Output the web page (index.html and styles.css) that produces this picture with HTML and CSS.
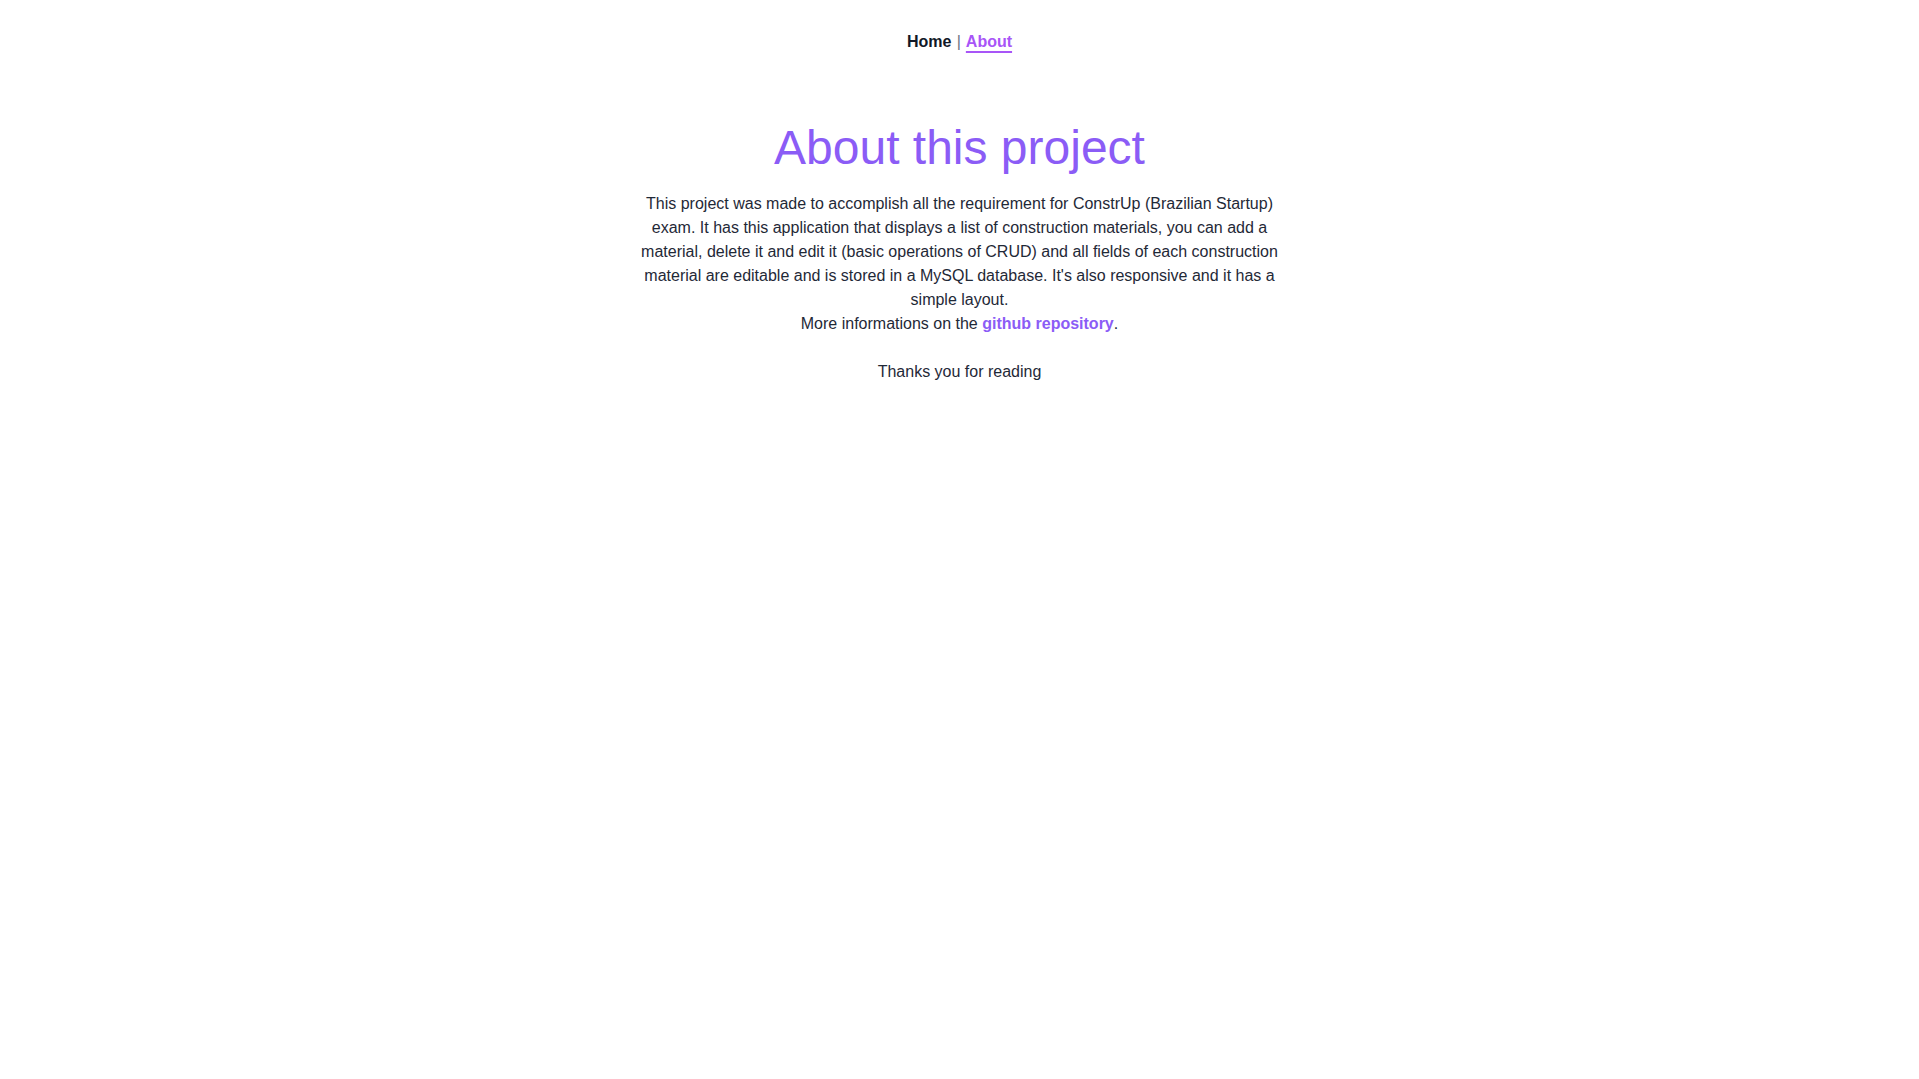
FILE: index.html
```html
<!DOCTYPE html>
<html lang="en">
<head>
<meta charset="utf-8">
<title>About</title>
<link rel="stylesheet" href="styles.css">
</head>
<body>
<nav class="nav">
  <a class="nav-link" href="#">Home</a> <span class="sep">|</span> <a class="nav-link active" href="#">About</a>
</nav>
<main class="about">
  <h1 class="title">About this project</h1>
  <p class="text">This project was made to accomplish all the requirement for ConstrUp (Brazilian Startup) exam. It has this application that displays a list of construction materials, you can add a material, delete it and edit it (basic operations of CRUD) and all fields of each construction material are editable and is stored in a MySQL database. It's also responsive and it has a simple layout.<br>More informations on the <a class="repo" href="#">github repository</a>.</p>
  <p class="text thanks">Thanks you for reading</p>
</main>
</body>
</html>
```

FILE: styles.css
```css
html, body {
  margin: 0;
  padding: 0;
  background: #ffffff;
}
body {
  font-family: "Liberation Sans", Arial, sans-serif;
  color: #1f2937;
  font-size: 16px;
}
.nav {
  padding-top: 30px;
  line-height: 24px;
  text-align: center;
  font-weight: 700;
}
.nav-link {
  color: #111827;
  text-decoration: none;
}
.nav-link.active {
  color: #a855f7;
  text-decoration: underline;
  text-decoration-thickness: 2px;
  text-underline-offset: 4px;
}
.sep {
  color: #6b7280;
  font-weight: 400;
  margin: 0 1px;
}
.about {
  max-width: 640px;
  margin: 0 auto;
  text-align: center;
}
.title {
  margin: 66px 0 0;
  font-size: 48px;
  font-weight: 400;
  line-height: normal;
  color: #8b5cf6;
}
.text {
  margin: 17px 0 0;
  line-height: 24px;
}
.thanks {
  margin-top: 24px;
}
.repo {
  color: #8b5cf6;
  font-weight: 700;
  text-decoration: none;
}
```
